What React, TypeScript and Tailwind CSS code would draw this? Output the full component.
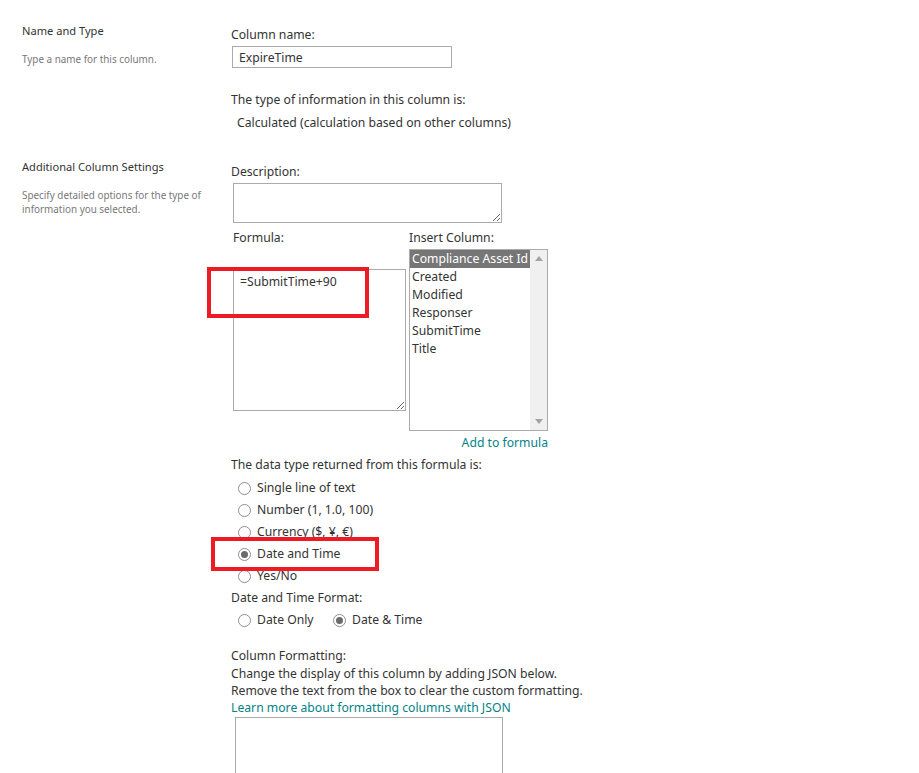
import React from 'react';

const font = { fontFamily: '"Noto Sans", "Open Sans", sans-serif' };

const Radio: React.FC<{ checked?: boolean; label: string }> = ({ checked, label }) => (
  <div className="flex items-center h-[22px]">
    <span className="w-[13px] h-[13px] rounded-full border border-[#8f8f8f] bg-white flex items-center justify-center shrink-0">
      {checked && <span className="w-[7px] h-[7px] rounded-full bg-[#6b6b6b]" />}
    </span>
    <span className="ml-[6px] text-[12.2px] text-[#333]">{label}</span>
  </div>
);

const columns = ['Compliance Asset Id', 'Created', 'Modified', 'Responser', 'SubmitTime', 'Title'];

export default function App() {
  return (
    <div className="relative w-[919px] h-[773px] overflow-hidden bg-white" style={font}>
      {/* Name and Type */}
      <div className="flex h-[158px]">
        <div className="w-[231px] pl-[22px] pt-[22px] shrink-0">
          <div className="text-[11.1px] leading-[18px] text-[#333]">Name and Type</div>
          <div className="mt-[12px] text-[9.9px] leading-[14px] text-[#777]">Type a name for this column.</div>
        </div>
        <div className="pt-[26px] text-[12.2px] text-[#333]">
          <div className="leading-[18px]">Column name:</div>
          <input
            readOnly
            value="ExpireTime"
            className="mt-[2px] ml-[1px] w-[220px] h-[22px] border border-[#ababab] px-[6px] text-[12.2px] text-[#333] outline-none"
          />
          <div className="mt-[23px] leading-[18px]">The type of information in this column is:</div>
          <div className="mt-[5px] ml-[6px] leading-[18px]">Calculated (calculation based on other columns)</div>
        </div>
      </div>

      {/* Additional Column Settings */}
      <div className="flex">
        <div className="w-[231px] pl-[22px] shrink-0">
          <div className="text-[11.1px] leading-[18px] text-[#333]">Additional Column Settings</div>
          <div className="mt-[12px] w-[184px] text-[9.9px] leading-[14px] text-[#777]">
            Specify detailed options for the type of information you selected.
          </div>
        </div>
        <div className="pt-[5px] text-[12.2px] text-[#333]">
          <div className="leading-[18px]">Description:</div>
          <textarea readOnly className="block mt-[2px] ml-[2px] w-[269px] h-[40px] border border-[#ababab] outline-none" />

          <div className="flex mt-[6px]">
            <div className="ml-[2px] w-[176px]">
              <div className="leading-[18px]">Formula:</div>
              <textarea
                readOnly
                value="=SubmitTime+90"
                className="block mt-[22px] w-[173px] h-[142px] border border-[#ababab] px-[6px] pt-[3px] text-[12.2px] text-[#333] outline-none"
              />
            </div>
            <div>
              <div className="leading-[18px]">Insert Column:</div>
              <div className="mt-[2px] w-[139px] h-[182px] border border-[#ababab] flex">
                <div className="flex-1">
                  {columns.map((c, i) => (
                    <div
                      key={c}
                      className={`h-[18px] leading-[18px] pl-[2px] whitespace-nowrap ${i === 0 ? 'bg-[#767676] text-white' : 'text-[#333]'}`}
                    >
                      {c}
                    </div>
                  ))}
                </div>
                <div className="w-[17px] bg-[#f0f0f0] flex flex-col justify-between items-center py-[6px]">
                  <svg width="8" height="5" viewBox="0 0 8 5"><path d="M0 5 L4 0 L8 5 Z" fill="#a3a3a3" /></svg>
                  <svg width="8" height="5" viewBox="0 0 8 5"><path d="M0 0 L4 5 L8 0 Z" fill="#a3a3a3" /></svg>
                </div>
              </div>
            </div>
          </div>

          <div className="w-[317px] text-right leading-[18px] mt-[3px] text-[#038387]">Add to formula</div>
          <div className="mt-[4px] leading-[18px]">The data type returned from this formula is:</div>
          <div className="mt-[3px] ml-[7px]">
            <Radio label="Single line of text" />
            <Radio label="Number (1, 1.0, 100)" />
            <Radio label="Currency ($, ¥, €)" />
            <Radio checked label="Date and Time" />
            <Radio label="Yes/No" />
          </div>
          <div className="mt-[2px] leading-[18px]">Date and Time Format:</div>
          <div className="mt-[2px] ml-[7px] flex">
            <div className="w-[95px]">
              <Radio label="Date Only" />
            </div>
            <Radio checked label="Date & Time" />
          </div>

          <div className="mt-[16px] leading-[17px]">
            <div>Column Formatting:</div>
            <div className="mt-[1px]">Change the display of this column by adding JSON below.</div>
            <div>Remove the text from the box to clear the custom formatting.</div>
            <div className="text-[#038387]">Learn more about formatting columns with JSON</div>
          </div>
          <textarea readOnly className="block mt-[1px] ml-[4px] w-[268px] h-[80px] border border-[#ababab] outline-none" />
        </div>
      </div>

      {/* highlight boxes */}
      <div className="absolute left-[207px] top-[267px] w-[162px] h-[51px] border-[4px] border-[#ed1c24] pointer-events-none" />
      <div className="absolute left-[211px] top-[537px] w-[168px] h-[34px] border-[4px] border-[#ed1c24] pointer-events-none" />
    </div>
  );
}
